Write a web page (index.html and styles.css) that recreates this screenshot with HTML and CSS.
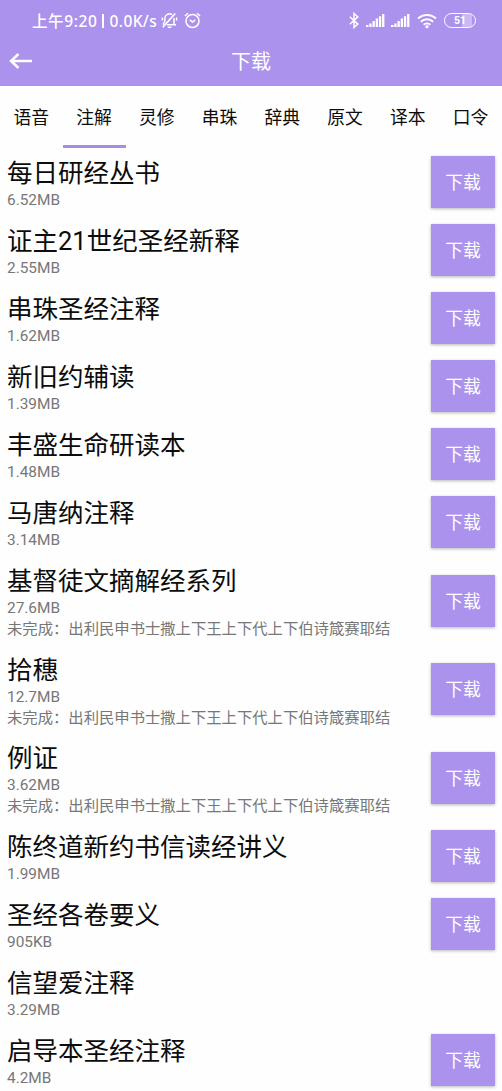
FILE: index.html
```html
<!DOCTYPE html>
<html lang="zh-CN">
<head>
<meta charset="utf-8">
<title>下载</title>
<link rel="stylesheet" href="styles.css">
</head>
<body>
<header class="header">
  <div class="status">
    <span class="clock">上午9:20</span><span class="divider"></span><span class="speed">0.0K/s</span>
    <svg class="mute" width="17" height="17" viewBox="0 0 17 17"><path d="M3.800 10V6.400a4.600 4.600 0 0 1 7.200-3.700M13 6v6.500M6 12.700h9M3.800 9.500L2 12.700M6.800 15.300h3.600M1.400 8.500V5.500M15.600 8.500V5.500"/><path class="slash" d="M1.800 15.200L14.200 1.500"/></svg>
    <svg class="alarm" width="17" height="17" viewBox="0 0 17 17"><circle cx="8.500" cy="9" r="6.500"/><path d="M5.800 7.900L8.500 10l2.700-2.100M.9 4L4 1.300M16.100 4L13 1.300"/></svg>
    <div class="signals">
      <svg class="bt" width="10" height="17" viewBox="0 0 10 17"><path d="M.8 4.800l8 7.300L5 15.500v-14l3.800 3.400-8 7.300"/></svg>
      <svg class="bars" width="19" height="15" viewBox="0 0 19 15"><path d="M0 12h2.500v2H0zM3.300 10.500h2.300V14H3.300zM6.500 8h2.300v6H6.500zM9.700 5.500H12V14H9.700zM12.900 3.200h2.300V14h-2.300zM16.100 1h2.300v13h-2.300z"/></svg>
      <svg class="bars second" width="19" height="15" viewBox="0 0 19 15"><path d="M0 12h2.500v2H0zM3.300 10.500h2.300V14H3.300zM6.500 8h2.300v6H6.500zM9.700 5.500H12V14H9.700zM12.900 3.200h2.300V14h-2.300zM16.100 1h2.300v13h-2.300z"/></svg>
      <svg class="wifi" width="20" height="16" viewBox="0 0 20 16"><path d="M1 5.500a13 13 0 0 1 18 0M3.900 8.700a8.800 8.800 0 0 1 12.200 0M6.700 11.700a4.800 4.800 0 0 1 6.600 0"/><circle cx="10" cy="13.700" r="1.600"/></svg>
      <span class="battery">51</span>
    </div>
  </div>
  <div class="appbar">
    <svg class="back" width="24" height="18" viewBox="0 0 24 18"><path d="M23 9H2.500M9.500 2L2 9l7.500 7"/></svg>
    <h1 class="heading">下载</h1>
  </div>
</header>
<nav class="tabs">
  <span class="tab">语音</span><span class="tab active">注解</span><span class="tab">灵修</span><span class="tab">串珠</span><span class="tab">辞典</span><span class="tab">原文</span><span class="tab">译本</span><span class="tab">口令</span>
</nav>
<main class="list">
  <div class="row"><div class="info"><div class="name">每日研经丛书</div><div class="size">6.52MB</div></div><button class="get">下载</button></div>
  <div class="row"><div class="info"><div class="name">证主21世纪圣经新释</div><div class="size">2.55MB</div></div><button class="get">下载</button></div>
  <div class="row"><div class="info"><div class="name">串珠圣经注释</div><div class="size">1.62MB</div></div><button class="get">下载</button></div>
  <div class="row"><div class="info"><div class="name">新旧约辅读</div><div class="size">1.39MB</div></div><button class="get">下载</button></div>
  <div class="row"><div class="info"><div class="name">丰盛生命研读本</div><div class="size">1.48MB</div></div><button class="get">下载</button></div>
  <div class="row"><div class="info"><div class="name">马唐纳注释</div><div class="size">3.14MB</div></div><button class="get">下载</button></div>
  <div class="row"><div class="info"><div class="name">基督徒文摘解经系列</div><div class="size">27.6MB</div><div class="note">未完成：出利民申书士撒上下王上下代上下伯诗箴赛耶结</div></div><button class="get">下载</button></div>
  <div class="row"><div class="info"><div class="name">拾穗</div><div class="size">12.7MB</div><div class="note">未完成：出利民申书士撒上下王上下代上下伯诗箴赛耶结</div></div><button class="get">下载</button></div>
  <div class="row"><div class="info"><div class="name">例证</div><div class="size">3.62MB</div><div class="note">未完成：出利民申书士撒上下王上下代上下伯诗箴赛耶结</div></div><button class="get">下载</button></div>
  <div class="row"><div class="info"><div class="name">陈终道新约书信读经讲义</div><div class="size">1.99MB</div></div><button class="get">下载</button></div>
  <div class="row"><div class="info"><div class="name">圣经各卷要义</div><div class="size">905KB</div></div><button class="get">下载</button></div>
  <div class="row"><div class="info"><div class="name">信望爱注释</div><div class="size">3.29MB</div></div></div>
  <div class="row"><div class="info"><div class="name">启导本圣经注释</div><div class="size">4.2MB</div></div><button class="get">下载</button></div>
</main>
</body>
</html>
```
FILE: styles.css
```css
* { box-sizing: border-box; }
body {
  margin: 0;
  height: 1091px;
  overflow: hidden;
  background: #fefefe;
  color: #0c0c0c;
  font-family: Roboto, "Noto Sans CJK SC", sans-serif;
}
svg { display: block; flex: none; fill: none; stroke: #fff; stroke-width: 1.3; }
.header { height: 86px; background: #ab92ec; color: #fff; }
.status {
  display: flex;
  align-items: center;
  height: 41px;
  padding-left: 32px;
  font: 500 15.5px/20px "Noto Sans", "Noto Sans CJK SC", sans-serif;
  white-space: nowrap;
}
.clock { width: 66px; letter-spacing: .6px; }
.divider { width: 1.5px; height: 14px; margin: 0 6px 0 4px; background: #fff; }
.speed { width: 51px; letter-spacing: .4px; }
.mute { stroke-width: 1.5; }
.mute .slash { stroke-width: 1.7; }
.alarm { margin-left: 6px; stroke-width: 1.5; }
.signals { display: flex; align-items: center; margin: 0 26px 0 auto; }
.bt { stroke-width: 1.5; }
.bars { margin-left: 7px; fill: #fff; stroke: none; }
.bars.second { margin-left: 6px; }
.wifi { margin-left: 7px; stroke-width: 2; }
.wifi circle { fill: #fff; stroke: none; }
.battery {
  width: 32px;
  height: 15px;
  margin-left: 7px;
  border: 1.5px solid #fff;
  border-radius: 8px;
  background: linear-gradient(90deg, transparent 58%, #c9baf3 58%, #c9baf3 90%, transparent 90%);
  font: 700 10.5px/14px Roboto, sans-serif;
  text-align: center;
}
.appbar {
  display: grid;
  grid-template-columns: 33px 1fr 33px;
  align-items: center;
  height: 40px;
}
.back { margin-left: 9px; stroke-width: 2.5; }
.heading { margin: 0; padding-top: 2px; font-size: 20px; font-weight: 400; line-height: 30px; text-align: center; }
.tabs { display: grid; grid-template-columns: repeat(8, 1fr); height: 62px; }
.tab { height: 62px; font-size: 17.8px; line-height: 64px; text-align: center; }
.tab.active { background: linear-gradient(#a78de0, #a78de0) 0 59px / 100% 3px no-repeat; }
.row {
  display: flex;
  align-items: center;
  justify-content: space-between;
  padding: 6px 7px 6.05px;
}
.info { white-space: nowrap; }
.name { height: 36px; font-size: 25.5px; line-height: 38px; }
.size { height: 20px; color: #777; font-size: 15.4px; line-height: 20px; }
.note { height: 20.5px; color: #777; font-size: 15.33px; line-height: 22px; }
.get {
  width: 64px;
  height: 52px;
  padding: 2px 0 0;
  border: 0;
  border-radius: 0;
  background: #ab92ec;
  box-shadow: 0 1px 3px rgba(0, 0, 0, .28);
  color: #fff;
  font: 17.8px/50px Roboto, "Noto Sans CJK SC", sans-serif;
}
```
